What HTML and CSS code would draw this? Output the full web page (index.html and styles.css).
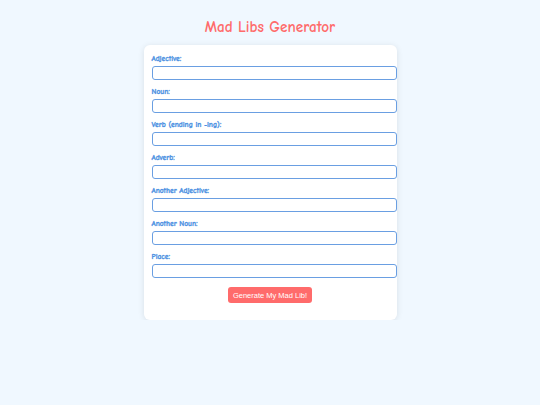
FILE: index.html
```html
<!DOCTYPE html>
<html>
<head>
<meta charset="utf-8">
<link rel="stylesheet" href="styles.css">
</head>
<body>
<h1 class="title">Mad Libs Generator</h1>
<div class="card">
  <div class="field"><label class="label">Adjective:</label><input class="input" type="text"></div>
  <div class="field"><label class="label">Noun:</label><input class="input" type="text"></div>
  <div class="field"><label class="label">Verb (ending in -ing):</label><input class="input" type="text"></div>
  <div class="field"><label class="label">Adverb:</label><input class="input" type="text"></div>
  <div class="field"><label class="label">Another Adjective:</label><input class="input" type="text"></div>
  <div class="field"><label class="label">Another Noun:</label><input class="input" type="text"></div>
  <div class="field"><label class="label">Place:</label><input class="input" type="text"></div>
  <div class="actions"><button class="btn" type="button">Generate My Mad Lib!</button></div>
</div>
</body>
</html>
```
FILE: styles.css
```css
html, body {
  margin: 0;
  padding: 0;
}
body {
  background: #f0f8ff;
  font-family: "Comic Sans MS", "Comic Neue", "DejaVu Sans", sans-serif;
  padding-top: 17px;
}
.title {
  margin: 0 0 8px;
  text-align: center;
  color: #ff6b6b;
  font-size: 15.2px;
  line-height: 20px;
  font-weight: 700;
}
.card {
  width: 237px;
  margin: 0 auto;
  padding: 8px;
  background: #ffffff;
  border-radius: 6px;
  box-shadow: 0 1px 6px rgba(0, 0, 0, 0.1);
}
.field {
  display: flex;
  flex-direction: column;
  margin-bottom: 6px;
}
.label {
  color: #4a90e2;
  font-size: 7.5px;
  font-weight: 700;
  line-height: 12px;
  margin-bottom: 1px;
  -webkit-text-stroke: 0.3px #4a90e2;
}
.input {
  display: block;
  width: 100%;
  box-sizing: content-box;
  height: 8px;
  padding: 2px 3px;
  margin: 0;
  border: 1px solid #6a9fe2;
  border-radius: 3px;
  background: #fff;
  outline: none;
}
.actions {
  display: flex;
  justify-content: center;
  padding-top: 3px;
  padding-bottom: 9px;
}
.btn {
  width: 84px;
  height: 16px;
  padding: 0;
  border: none;
  border-radius: 3px;
  background: #ff6b6b;
  color: #ffffff;
  font-family: "Liberation Sans", Arial, sans-serif;
  font-size: 7.5px;
}
```
